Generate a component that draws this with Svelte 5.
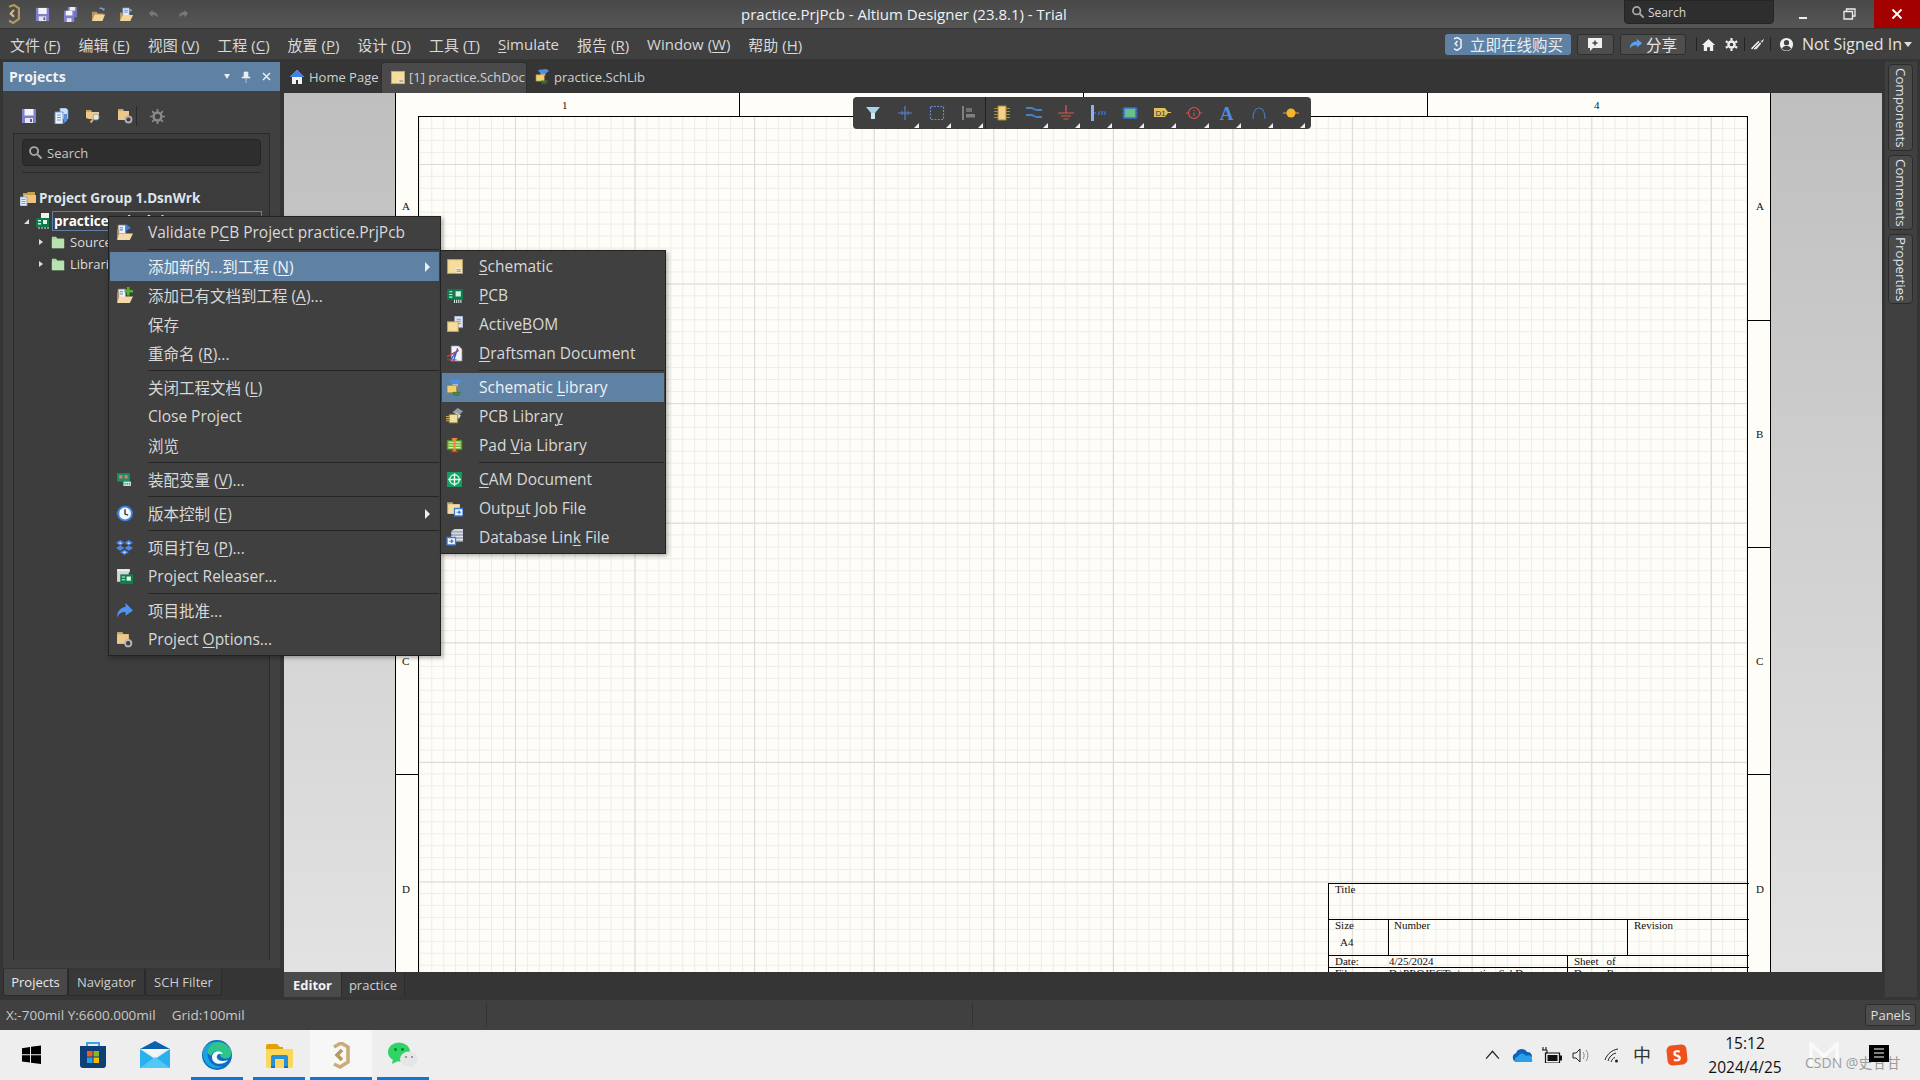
<script>
  const icons = {
    logo: '<path d="M5 3 11 1l6 4v13l-7 5-5-3" fill="none" stroke="#b59a5c" stroke-width="2.6"/><path d="M11 7 7 11.5l4 4" fill="none" stroke="#d3bd87" stroke-width="2.6"/>',
    logow: '<path d="M5 3 11 1l6 4v13l-7 5-5-3" fill="none" stroke="#eef2f6" stroke-width="2.6"/><path d="M11 7 7 11.5l4 4" fill="none" stroke="#eef2f6" stroke-width="2.6"/>',
    save: '<path d="M1 1h14v14H1z" fill="#8080c8"/><path d="M3.500 1h9v6.500h-9z" fill="#f4f4fb"/><path d="M4 10h8v5H4z" fill="#e6e6f2"/><path d="M9 11h2v3H9z" fill="#5a5aa0"/>',
    saveall: '<path d="M5 0h10v11H5z" fill="#7272b8"/><path d="M7 0h6v4H7z" fill="#eee"/><path d="M1 4h11v12H1z" fill="#8080c8"/><path d="M3 4h7v5H3z" fill="#f4f4fb"/><path d="M4 12h5v4H4z" fill="#e6e6f2"/>',
    open: '<path d="M1 5h5l1.500 2H13v7H1z" fill="#b8975a"/><path d="M4 8h11l-3 7H1z" fill="#f3d69a"/><path d="M9 1.500c2-.8 3.500-.3 4.500 1.500" fill="none" stroke="#7aa7e0" stroke-width="1.300"/><path d="m14.500 1-.5 3-2.500-1z" fill="#7aa7e0"/>',
    openproj: '<path d="M4 1h7v9H4z" fill="#e6ecf8" stroke="#6b8cc0" stroke-width=".8"/><path d="M5.500 3.500h4M5.500 5.500h4" stroke="#6b8cc0"/><path d="M1 6h3v8H1z" fill="#b8975a"/><path d="M4 8.500h11L12 15H1z" fill="#f3d69a"/><path d="M12.500 2v3M11 3.500h3" stroke="#7aa7e0"/>',
    undo: '<path d="M6 3 2 7l4 4V8.500c3 0 5 .8 6 3 0-4-2.200-6-6-6.500z" fill="#777"/>',
    redo: '<path d="m10 3 4 4-4 4V8.500c-3 0-5 .8-6 3 0-4 2.200-6 6-6.500z" fill="#777"/>',
    search: '<circle cx="6.500" cy="6.500" r="4.300" fill="none" stroke="#a8a8a8" stroke-width="2"/><path d="m10 10 4.500 4.500" stroke="#a8a8a8" stroke-width="2.200"/>',
    pages: '<path d="M7 0h6l2 2v9H7z" fill="#cfe0f5" stroke="#6c92c8" stroke-width=".7"/><path d="M2 4h8v12H2z" fill="#eef3fb" stroke="#6c92c8"/><path d="M4 7h4M4 9.500h4M4 12h4" stroke="#6c92c8"/><path d="M11 6h3v7l-3 2z" fill="#5d8ed8"/>',
    foldsearch: '<path d="M1 2h5l1 2h7v6H1z" fill="#c8a964"/><path d="M1 4h13v7H4l-3-1z" fill="#ecc98a"/><circle cx="11" cy="9" r="3" fill="#dfe9ef" stroke="#98a8ae"/><path d="m8.500 11-3 3.500" stroke="#c9ac64" stroke-width="2"/>',
    foldgear: '<path d="M1 1h5l1 2h5v9H1z" fill="#c8a964"/><path d="M1 3h11v9H1z" fill="#ecc98a"/><circle cx="11.500" cy="11.500" r="3" fill="#3f3f3f" stroke="#b0b0b0" stroke-width="1.800"/>',
    gear: '<circle cx="8" cy="8" r="4.200" fill="none" stroke="#8b8b8b" stroke-width="2.600"/><path d="M8 0v3M8 13v3M0 8h3M13 8h3M2.300 2.300l2 2M11.700 11.700l2 2M2.300 13.700l2-2M11.700 4.300l2-2" stroke="#8b8b8b" stroke-width="1.800"/>',
    group: '<path d="M3 3h4l1-1h7v9H3z" fill="#c99d50"/><path d="M4 5h12v8H4z" fill="#eec27b"/><path d="M0 7h7v9H0z" fill="#e3edf9" stroke="#7e9bc5" stroke-width=".8"/><path d="M1.500 9.500h4M1.500 11.500h4M1.500 13.500h4" stroke="#7e9bc5"/>',
    proj: '<path d="M5 0h8v8H5z" fill="#f0f0f0"/><path d="M0 5h13v9H0z" fill="#0d7a4a"/><path d="M2 7h3v1.500H2zM2 10h3v1.500H2zM7 7h4v4H7z" fill="#dff3e2"/><path d="M3 14v2M6 14v2M9 14v2M12 14v2" stroke="#dff3e2"/>',
    folder: '<path d="M1 2h5l1 2h8v11H1z" fill="#a9d8a4"/><path d="M1 5h14v10H1z" fill="#b8e2b2"/>',
    validate: '<path d="M2 1h7v8H2z" fill="#eef3fb" stroke="#8b8b8b" stroke-width=".7"/><path d="M3.500 3.500h3M3.500 5.500h3" stroke="#5a7ec8"/><path d="M1 5h2v9H1z" fill="#b6915a"/><path d="M3 9h13l-3 6H1z" fill="#f3d9ab"/><path d="m9 0 5 3.500L9 7z" fill="#3d7ee0"/>',
    addex: '<path d="M2 2h7v8H2z" fill="#eef3fb" stroke="#8b8b8b" stroke-width=".7"/><path d="M3.500 4.500h3M3.500 6.500h3" stroke="#5a7ec8"/><path d="M1 5h2v9H1z" fill="#b6915a"/><path d="M3 9h13l-3 6H1z" fill="#f3d9ab"/><path d="M11.500 0v8M8 4h8" stroke="#55b32c" stroke-width="2.400"/>',
    variant: '<path d="M1 2h12v8H1z" fill="#16915f"/><path d="M3 4h3v3H3zM8 4h3v3H8z" fill="#e77a6f"/><path d="M7 10h7v4H7z" fill="#e6f5e8"/><path d="M8.500 11v2M10.500 11v2M12.500 11v2" stroke="#16915f"/>',
    clock: '<circle cx="8.500" cy="8" r="6.500" fill="#f4f6fa" stroke="#3f82e6" stroke-width="1.800"/><path d="M8.500 4v4.500l3 1" fill="none" stroke="#333" stroke-width="1.300"/><path d="m0 8 3-2v4z" fill="#3f82e6"/>',
    box: '<path d="m4 1 4 2.500L4 6 0 3.500zM12 1l4 2.500L12 6 8 3.500zM4 6l4 2.500L4 11 0 8.500zM12 6l4 2.500-4 2.500-4-2.500zM8 10l4 2.500L8 15l-4-2.500z" fill="#4f86e8"/><path d="m4 3 1.500 1-1.500.8L2.500 4zM12 3l1.500 1-1.500.8-1.500-.8zM8 11.500l1.500 1-1.500.8-1.500-.8z" fill="#dce8fb"/>',
    release: '<path d="M1 1h12v3H1z" fill="#eee"/><path d="M1 3h11v10H1z" fill="#d6d6d6"/><path d="M4 6h12v9H4z" fill="#0f7d52"/><path d="M5.500 8h3v1h-3zM5.500 10.500h3v1h-3zM10 8h4v4h-4z" fill="#dff3e2"/>',
    share: '<path d="m9 1 7 7-7 5V9.500C5 9.500 2.500 11 1 15 1 9 4 5 9 4.700z" fill="#4f93ee"/>',
    options: '<path d="M1 1h5l1 2h5v9H1z" fill="#c5a560"/><path d="M1 3h11v9H1z" fill="#ecc98a"/><circle cx="11.500" cy="11.500" r="3" fill="#3f3f3f" stroke="#b8b8b8" stroke-width="1.800"/>',
    schdoc: '<path d="M1 1h15v14H1z" fill="#b9a36c"/><path d="M2 2h13v12H2z" fill="#f7dd9c"/><path d="M9 9h6v5H9z" fill="#efe9d5"/><path d="M10 11h4M10 12.500h4" stroke="#9c8a58" stroke-width=".8"/>',
    pcbdoc: '<path d="M1 2h15v10H1z" fill="#0b7d50"/><path d="M3 4h3v1H3zM3 6.500h3v1H3zM3 9h3v1H3zM9 4h5v5H9z" fill="#d8f0dc"/><path d="M8 12v3M10 12v3M12 12v3M14 12v3" stroke="#d8f0dc"/>',
    bom: '<path d="M8 0h8v11H8z" fill="#dfe5f3" stroke="#8291b8" stroke-width=".8"/><path d="M10 3h4M10 5h4M10 7h4" stroke="#8291b8"/><path d="M1 5h11v10H1z" fill="#c9a962"/><path d="M2 6h9v8H2z" fill="#f7dd9c"/>',
    drafts: '<path d="M5 1h7l3 3v11H5z" fill="#f4f4f8" stroke="#a2a2b6" stroke-width=".7"/><path d="M1 11 12 5" stroke="#d83838" stroke-width="1.300"/><path d="M7 15 11 3M4 15l5-8" stroke="#3a62d0" stroke-width="1.300"/><path d="M1 14h9" stroke="#d83838"/>',
    schlib: '<path d="m3 1 9-1 3 2-4 3H6z" fill="#4d8de0"/><path d="M6 5h5v2H6z" fill="#e8e2b8"/><path d="M1 6h9v7H1z" fill="#f0cf73" stroke="#8c7a38" stroke-width=".6"/><path d="M6 13h8M7 15h6M8 12v4M11 12v4" stroke="#3c7c2c"/>',
    pcblib: '<path d="m6 4 5-4 5 3-4 4z" fill="#90a0b0"/><path d="m9 4 5 3-2 3-3-2z" fill="#d6e7e2"/><path d="M3 6h8v8H3z" fill="#efe0a0" stroke="#8c7a38" stroke-width=".8"/><path d="M0 8h3M0 10h3M0 12h3" stroke="#c0a860"/>',
    padlib: '<path d="M1 3h14v9H1z" fill="#7ab83c" stroke="#3c7c1c" stroke-width=".8"/><path d="M2.500 5h11M2.500 7.500h11M2.500 10h11" stroke="#e8f0c0"/><path d="m5 1 6 0-2 3v8l2 2H5l2-2V4z" fill="#ee8a3c"/><path d="M4 14h8" stroke="#b83020"/>',
    cam: '<path d="M1 1h14v14H1z" fill="#10a060"/><circle cx="8" cy="8" r="4.500" fill="none" stroke="#e4f6ea" stroke-width="1.300"/><path d="M8 2v12M2 8h12" stroke="#e4f6ea" stroke-width="1.300"/>',
    outjob: '<path d="M1 2h5l1 2h6v9H1z" fill="#b59f6c"/><path d="M2 4h11v9H2z" fill="#f6dca4"/><path d="M8 8h8v7H8z" fill="#eef4fc" stroke="#3c7ee0" stroke-width="1.200"/><path d="M10 11.500h3M12 10l1.500 1.500L12 13" stroke="#3c7ee0"/>',
    dblink: '<path d="M5 2h11v10H5z" fill="#a8b0bc"/><path d="M5 4h11M5 7h11M5 10h11" stroke="#e4e8ee"/><path d="m5 2 3-2h8v2z" fill="#d2d8e0"/><path d="M1 8h8v7H1z" fill="#eef4fc" stroke="#3c7ee0" stroke-width="1.200"/><path d="M3 11.500h3M5 10l1.500 1.500L5 13" stroke="#3c7ee0"/>',
    home: '<path d="M8 1 1 8h2v7h4v-4h2v4h4V8h2z" fill="#f2f2f2"/><path d="M8 1 1 8h14z" fill="#3f82e6"/>',
    homew: '<path d="M8 2 1 8.500h2V15h3.500v-4h3v4H13V8.500h2z" fill="#f0f0f0"/>',
    gearw: '<circle cx="8" cy="8" r="3.800" fill="none" stroke="#f0f0f0" stroke-width="3"/><path d="M8 0v3M8 13v3M1 4l2.500 1.500M12.500 10.500 15 12M1 12l2.500-1.500M12.500 5.500 15 4" stroke="#f0f0f0" stroke-width="2.600"/>',
    brush: '<path d="M1 12 9 4l3 3-5 6H2zM15 2l-2 4-2-2z" fill="#e8e8e8"/><path d="M2 14 14 2" stroke="#404040" stroke-width="1"/>',
    user: '<circle cx="8" cy="8" r="7" fill="#f0f0f0"/><circle cx="8" cy="6" r="2.800" fill="#404040"/><path d="M3 12.500C4 10 6 9.500 8 9.500s4 .5 5 3c-3 2.500-7 2.500-10 0z" fill="#404040"/>',
    chat: '<path d="M1 2h14v10H6l-3 3v-3H1z" fill="#f0f0f0"/><path d="M8 4.500v5M5.500 7h5" stroke="#404040" stroke-width="1.500"/>',
    sharesm: '<path d="m9 2 6 5-6 5V9C6 9 3 10 1 13c0-5 3-8 8-8z" fill="#58a0f0"/>',
    tbfilter: '<path d="M1 2h14L10 8v6H6V8z" fill="#a5d6e8"/><path d="M6 8h4v6H6z" fill="#cdeaf2"/>',
    tbcross: '<path d="M8 1v14M1 8h14" stroke="#5a80cc" stroke-width="1.200"/><path d="M5 6v4M11 6v4" stroke="#5a80cc"/>',
    tbrect: '<path d="M1.500 1.500h13v13h-13z" fill="none" stroke="#6a8ae0" stroke-width="1.200" stroke-dasharray="2 1.300"/>',
    tbalign: '<path d="M1 1h2v14H1z" fill="#808080"/><path d="M5 3h6v4H5z" fill="#707070"/><path d="M5 9h9v3.500H5z" fill="#808080"/>',
    tbcomp: '<path d="M4 1h8v14H4z" fill="#f3d189" stroke="#a88a3a"/><path d="M0 3.500h4M0 6.500h4M0 9.500h4M0 12.500h4M12 3.500h4M12 6.500h4M12 9.500h4M12 12.500h4" stroke="#a88a3a"/>',
    tbwire: '<path d="M0 3h5c3 0 3 2 6 2h5M0 10h5c3 0 3 2 6 2h5" fill="none" stroke="#4a82c0" stroke-width="1.800"/>',
    tbgnd: '<path d="M8 0v8M0 8h16M3 11h10M5.500 14h5" stroke="#e05a50" stroke-width="1.200"/>',
    tbbus: '<path d="M1 0h3v16H1z" fill="#8cb0f0"/><path d="M4 8h2M8 10l2-4M11 10l2-4M14 10l2-4" stroke="#3a70d0" stroke-width="1.500"/>',
    tbsheet: '<path d="M2 3h12v10H2z" fill="#68c088" stroke="#3a70d0" stroke-width="1.500"/><path d="M0 5h2M0 8h2M0 11h2M14 5h2M14 8h2M14 11h2" stroke="#3a70d0"/>',
    tbparam: '<path d="M0 8h2.500M13.500 8H16" stroke="#e05050"/><circle cx="8" cy="8" r="5.500" fill="none" stroke="#e05050" stroke-width="1.100"/><path d="M8 5v1M8 7.500V11" stroke="#e05050"/>',
    tbarc: '<path d="M2 14C2 6 5 3 8 3s6 3 6 11" fill="none" stroke="#4a78b8" stroke-width="1.200"/>',
    tbport: '<path d="M0 8h16" stroke="#e8a040"/><circle cx="8" cy="8" r="4.500" fill="#f5b62c"/>',
    win: '<path d="M1 3.200 9 2v7.300H1zM10 1.800 20 .5v8.800H10zM1 10.300h8v7.300l-8-1.100zM10 10.300h10v8.800l-10-1.300z" fill="#000"/>',
    store: '<path d="M9 4V1h12v3" fill="none" stroke="#2fa8e8" stroke-width="2"/><path d="M2 4h26v19a3 3 0 0 1-3 3H5a3 3 0 0 1-3-3z" fill="#0f3f78"/><path d="M9 9h5.500v5.500H9z" fill="#f05a28"/><path d="M15.500 9H21v5.500h-5.500z" fill="#7fba28"/><path d="M9 15.500h5.500V21H9z" fill="#25a3e0"/><path d="M15.500 15.500H21V21h-5.500z" fill="#fdb900"/>',
    mail: '<path d="M0 8 15 0l15 8z" fill="#0a62ae"/><path d="M4 8h22l-11 8z" fill="#f2f6fa"/><path d="M0 8v19h30V8L15 18z" fill="#2bb0ee"/><path d="m0 27 15-11 15 11z" fill="#52c8f6"/>',
    edge: '<circle cx="15" cy="15" r="15" fill="#0e6cc4"/><path d="M1 10C5 1 22-3 29 10c2 6-3 10-8 8-3-1-3-4-3-5-2-3-8-2-9 3C6 14 4 11 1 10z" fill="#2fc48c"/><path d="M1 12C3 5 10 2 15 2c-7 2-11 8-9 15 1 6 8 11 15 9-8 6-21-1-20-14z" fill="#1ba2e0"/><path d="M10 17c0-6 8-8 11-3-3-1-7 0-6 4 1 3 6 4 11 2-3 5-16 6-16-3z" fill="#f4fbff"/>',
    explorer: '<path d="M0 3a2 2 0 0 1 2-2h9l3 3h3v2H0z" fill="#e3a008"/><path d="M0 6h27v17a2 2 0 0 1-2 2H2a2 2 0 0 1-2-2z" fill="#fbd75c"/><path d="M5 23v-9a2 2 0 0 1 2-2h13a2 2 0 0 1 2 2v9h-4v-7H9v7z" fill="#2690d8"/><path d="M5 25v-2h4v2zM18 25v-2h4v2z" fill="#1a6fb4"/>',
    altium: '<path d="M4 5 11 1l7 4v15l-8 5-6-3" fill="none" stroke="#c8ad78" stroke-width="3.600"/><path d="M12 8 7 13l5 5" fill="none" stroke="#b69a63" stroke-width="3.600"/>',
    wechat: '<ellipse cx="11" cy="10" rx="11" ry="9.500" fill="#2ed565"/><path d="m5 17-1 5 6-3z" fill="#2ed565"/><circle cx="7.500" cy="7.500" r="1.400" fill="#127a38"/><circle cx="14.500" cy="7.500" r="1.400" fill="#127a38"/><ellipse cx="21" cy="17" rx="9" ry="7.500" fill="#e6e6e6"/><path d="m25 22 2 4-5-2z" fill="#e6e6e6"/><circle cx="18" cy="15" r="1.100" fill="#888"/><circle cx="24" cy="15" r="1.100" fill="#888"/>',
    chev: '<path d="M2 11 8 4l6 7" fill="none" stroke="#222" stroke-width="1.200"/>',
    cloud: '<path d="M5 15a4.500 4.500 0 0 1-1-8.800A6 6 0 0 1 15 5a4.500 4.500 0 0 1 5 5h-3z" fill="#0f62b8"/><path d="M5 15c-3 0-3-5 1-5.500C8 5 12 6 14 9c4-2 7 1 6 6z" fill="#2ba0e8"/>',
    batt: '<path d="M1 0v3M4 0v3M0 3h5v3H3.500v3" fill="none" stroke="#111"/><path d="M3.500 6h14v10h-14z" fill="none" stroke="#111" stroke-width="1.200"/><path d="M5.500 8h10v6h-10z" fill="#111"/><path d="M18 8.500h2v5h-2z" fill="#111"/>',
    speaker: '<path d="M1 6h3l4-4v13L4 11H1z" fill="none" stroke="#222"/><path d="M11 5c1.500 2 1.500 5 0 7M14 3c2.500 3 2.500 8 0 11" fill="none" stroke="#888"/>',
    wifi: '<path d="M1 13C3 7 8 3 14 2M4 14c1-4 4-7 8-8M7 15c.6-2 2-4 4-4.500" fill="none" stroke="#222"/><circle cx="12.500" cy="14" r="1.500" fill="#222"/>',
    notif: '<path d="M0 0h20v17H0z" fill="#000"/><path d="M5 4h10M5 8h10M5 12h10" stroke="#fff"/>',
  }

  const menuLeft = ['文件 (&F)', '编辑 (&E)', '视图 (&V)', '工程 (&C)', '放置 (&P)', '设计 (&D)', '工具 (&T)', '&Simulate', '报告 (&R)', 'Window (&W)', '帮助 (&H)']

  const mainMenu = [
    { icon: 'validate', label: 'Validate P&CB Project practice.PrjPcb' },
    { sep: true },
    { label: '添加新的...到工程 (&N)', arrow: true, active: true },
    { icon: 'addex', label: '添加已有文档到工程 (&A)...' },
    { label: '保存' },
    { label: '重命名 (&R)...' },
    { sep: true },
    { label: '关闭工程文档 (&L)' },
    { label: 'Close Project' },
    { label: '浏览' },
    { sep: true },
    { icon: 'variant', label: '装配变量 (&V)...' },
    { sep: true },
    { icon: 'clock', label: '版本控制 (&E)', arrow: true },
    { sep: true },
    { icon: 'box', label: '项目打包 (&P)...' },
    { icon: 'release', label: 'Project Releaser...' },
    { sep: true },
    { icon: 'share', label: '项目批准...' },
    { icon: 'options', label: 'Project &Options...' },
  ]

  const subMenu = [
    { icon: 'schdoc', label: '&Schematic' },
    { icon: 'pcbdoc', label: '&PCB' },
    { icon: 'bom', label: 'Active&BOM' },
    { icon: 'drafts', label: '&Draftsman Document' },
    { sep: true },
    { icon: 'schlib', label: 'Schematic &Library', active: true },
    { icon: 'pcblib', label: 'PCB Librar&y' },
    { icon: 'padlib', label: 'Pad &Via Library' },
    { sep: true },
    { icon: 'cam', label: '&CAM Document' },
    { icon: 'outjob', label: 'Outp&ut Job File' },
    { icon: 'dblink', label: 'Database Lin&k File' },
  ]

  const tools = [
    { icon: 'tbfilter' },
    { icon: 'tbcross', more: true },
    { icon: 'tbrect', more: true },
    { icon: 'tbalign', more: true, sep: true },
    { icon: 'tbcomp' },
    { icon: 'tbwire', more: true },
    { icon: 'tbgnd', more: true },
    { icon: 'tbbus', more: true },
    { icon: 'tbsheet', more: true },
    { tag: true, more: true },
    { icon: 'tbparam', more: true },
    { letter: 'A', more: true },
    { icon: 'tbarc', more: true },
    { icon: 'tbport', more: true },
  ]

  const taskbar = [
    { icon: 'win', w: 21, h: 20, vb: '0 0 21 20' },
    { icon: 'store', w: 30, h: 27, vb: '0 0 30 27' },
    { icon: 'mail', w: 30, h: 28, vb: '0 0 30 28' },
    { icon: 'edge', w: 30, h: 30, vb: '0 0 30 30', on: true },
    { icon: 'explorer', w: 27, h: 25, vb: '0 0 27 25', on: true },
    { icon: 'altium', w: 22, h: 27, vb: '0 0 22 27', on: true, cur: true },
    { icon: 'wechat', w: 30, h: 26, vb: '0 0 30 26', on: true },
  ]

  const zones = [0, 1, 2, 3]

  function parts(label) {
    const i = label.indexOf('&')
    if (i < 0) return [label, '', '']
    return [label.slice(0, i), label[i + 1], label.slice(i + 2)]
  }
</script>

{#snippet ico(name, size = 16, vb = '0 0 16 16', h = size)}
  <svg class="ico" width={size} height={h} viewBox={vb}>{@html icons[name]}</svg>
{/snippet}

{#snippet mnemonic(label)}
  {@const p = parts(label)}
  <span>{p[0]}<u>{p[1]}</u>{p[2]}</span>
{/snippet}

{#snippet menuRows(rows)}
  {#each rows as r}
    {#if r.sep}
      <div class="m-sep"></div>
    {:else}
      <div class="m-row" class:active={r.active}>
        <span class="m-ico">{#if r.icon}{@render ico(r.icon, 17, '0 0 16 16', 17)}{/if}</span>
        {@render mnemonic(r.label)}
        {#if r.arrow}<span class="m-arrow"></span>{/if}
      </div>
    {/if}
  {/each}
{/snippet}

<div class="app">
  <header class="titlebar">
    <div class="quick">
      <span class="q-logo">{@render ico('logo', 18, '0 0 22 24', 20)}</span>
      {#each ['save', 'saveall', 'open', 'openproj', 'undo', 'redo'] as q}
        <span class="q-btn">{@render ico(q, 15)}</span>
      {/each}
    </div>
    <div class="title">practice.PrjPcb - Altium Designer (23.8.1) - Trial</div>
    <div class="top-search">{@render ico('search', 14)}<span>Search</span></div>
    <div class="win-btn nudge"><i class="w-min"></i></div>
    <div class="win-btn nudge">
      <svg width="13" height="13" viewBox="0 0 13 13"><path d="M3.500 3V1h8.500v7H9.500M1 3.500h8.500V11H1z" fill="none" stroke="#eee" stroke-width="1.300"/></svg>
    </div>
    <div class="win-btn close">
      <svg width="12" height="12" viewBox="0 0 12 12"><path d="m1.500 1.500 9 9M10.500 1.500l-9 9" stroke="#fff" stroke-width="1.800"/></svg>
    </div>
  </header>

  <nav class="menubar">
    <div class="menu-left">
      {#each menuLeft as m}
        <span class="menu-item">{@render mnemonic(m)}</span>
      {/each}
    </div>
    <div class="menu-right">
      <button class="buy">{@render ico('logow', 13, '0 0 22 24', 14)}<span>立即在线购买</span></button>
      <button class="hbtn chat">{@render ico('chat', 16)}</button>
      <button class="hbtn share">{@render ico('sharesm', 14)}<span>分享</span></button>
      <i class="vsep first"></i>
      <span class="hicon">{@render ico('homew', 15)}</span>
      <span class="hicon">{@render ico('gearw', 13)}</span>
      <i class="vsep wide"></i>
      <span class="hicon">{@render ico('brush', 15)}</span>
      <i class="vsep wide"></i>
      <span class="hicon user">{@render ico('user', 15)}</span>
      <span class="signed">Not Signed In</span>
      <i class="caret"></i>
    </div>
  </nav>

  <main class="workspace">
    <aside class="dock">
      <div class="panel-head">
        <strong>Projects</strong>
        <span class="ph-btns">
          <i class="ph-down"></i>
          <svg width="10" height="12" viewBox="0 0 10 12"><path d="M3 1h4v5h2v1H1V6h2zM5 7v5" fill="#eee" stroke="#eee" stroke-width=".6"/></svg>
          <svg width="9" height="9" viewBox="0 0 9 9"><path d="m1 1 7 7M8 1 1 8" stroke="#eee" stroke-width="1.500"/></svg>
        </span>
      </div>
      <div class="panel-body">
        <div class="panel-tools">
          {#each ['save', 'pages', 'foldsearch', 'foldgear'] as t}
            <span class="pt-btn">{@render ico(t, 16)}</span>
          {/each}
          <i class="pt-sep"></i>
          <span class="pt-btn">{@render ico('gear', 15)}</span>
        </div>
        <div class="panel-inner">
          <div class="p-search">{@render ico('search', 15)}<span>Search</span></div>
          <div class="p-line"></div>
          <div class="tree">
            <div class="t-row t-group">{@render ico('group', 16)}<b>Project Group 1.DsnWrk</b></div>
            <div class="t-row t-proj">
              <i class="t-open"></i>
              {@render ico('proj', 16)}
              <b class="t-sel">practice.PrjPcb *</b>
            </div>
            <div class="t-row t-child"><i class="t-closed"></i>{@render ico('folder', 14)}<span>Source Documents</span></div>
            <div class="t-row t-child"><i class="t-closed"></i>{@render ico('folder', 14)}<span>Libraries</span></div>
          </div>
        </div>
      </div>
      <div class="panel-tabs">
        <span class="p-tab on">Projects</span>
        <span class="p-tab">Navigator</span>
        <span class="p-tab">SCH Filter</span>
      </div>
    </aside>

    <section class="center">
      <div class="doc-tabs">
        <span class="d-tab">{@render ico('home', 16)}Home Page</span>
        <span class="d-tab on">{@render ico('schdoc', 15)}[1] practice.SchDoc</span>
        <span class="d-tab">{@render ico('schlib', 15)}practice.SchLib</span>
      </div>

      <div class="canvas">
        <div class="sheet">
          {#each zones as z}
            {#if z > 0}
              <i class="tick-v" style="left: {z * 344 - 1}px"></i>
              <i class="tick-h left" style="top: {z * 227}px"></i>
              <i class="tick-h right" style="top: {z * 227}px"></i>
            {/if}
            <span class="zone" style="left: {166 + z * 344}px; top: 6px">{z + 1}</span>
            <span class="zone" style="left: 6px; top: {107 + z * 227.7}px">{'ABCD'[z]}</span>
            <span class="zone" style="left: 1360px; top: {107 + z * 227.7}px">{'ABCD'[z]}</span>
          {/each}
          <div class="frame">
            <div class="block">
              <div class="b-row b-title"><span>Title</span></div>
              <div class="b-row b-mid">
                <div class="b-size"><span>Size</span><span class="a4">A4</span></div>
                <div class="b-num"><span>Number</span></div>
                <div class="b-rev"><span>Revision</span></div>
              </div>
              <div class="b-row b-line">
                <div class="b-a"><span class="lab">Date:</span><span>4/25/2024</span></div>
                <div class="b-b"><span>Sheet</span><span class="of">of</span></div>
              </div>
              <div class="b-row b-line">
                <div class="b-a"><span class="lab">File:</span><span>D:\PROJECT\..\practice.SchDoc</span></div>
                <div class="b-b"><span>Drawn By:</span></div>
              </div>
            </div>
          </div>
        </div>

        <div class="ftool">
          {#each tools as t}
            <span class="ft" class:more={t.more} class:sep={t.sep}>
              {#if t.tag}
                <svg width="17" height="10" viewBox="0 0 17 10"><path d="M0 0h11l3 4h3v1h-3l-3 4H0z" fill="#e0c060"/><text x="1.500" y="7.800" font-size="8" font-family="Liberation Sans" fill="#333">D1</text></svg>
              {:else if t.letter}
                <span class="ft-a">{t.letter}</span>
              {:else}
                {@render ico(t.icon, 16)}
              {/if}
            </span>
          {/each}
        </div>
      </div>

      <div class="editor-tabs">
        <span class="e-tab on">Editor</span>
        <span class="e-tab">practice</span>
      </div>
    </section>

    <aside class="side">
      <span class="s-tab c1">Components</span>
      <span class="s-tab c2">Comments</span>
      <span class="s-tab c3">Properties</span>
    </aside>

    <div class="menu main-menu">{@render menuRows(mainMenu)}</div>
    <div class="menu sub-menu">{@render menuRows(subMenu)}</div>
  </main>

  <footer class="status">
    <div class="st-cell first"><span>X:-700mil Y:6600.000mil</span><span class="grid-txt">Grid:100mil</span></div>
    <div class="st-cell"></div>
    <button class="panels">Panels</button>
  </footer>

  <div class="taskbar">
    {#each taskbar as t}
      <span class="tb" class:on={t.on} class:cur={t.cur}>{@render ico(t.icon, t.w, t.vb, t.h)}</span>
    {/each}
    <div class="tray">
      <span class="tr t1">{@render ico('chev', 17)}</span>
      <span class="tr t2">{@render ico('cloud', 21, '0 0 21 16', 16)}</span>
      <span class="tr t3">{@render ico('batt', 20, '0 0 20 16', 16)}</span>
      <span class="tr t4">{@render ico('speaker', 20, '0 0 20 17', 17)}</span>
      <span class="tr t5">{@render ico('wifi', 16)}</span>
      <span class="tr t6">中</span>
      <span class="tr sogou">S</span>
      <div class="clock"><span>15:12</span><span>2024/4/25</span></div>
    </div>
    <div class="wm">
      <svg class="wm-m" width="30" height="24" viewBox="0 0 30 24"><path d="M2 24V2l13 12L28 2v22" fill="none" stroke="#fafafa" stroke-width="3.500"/></svg>
      <span class="wm-t">CSDN @史甘甘</span>
      <span class="notif">{@render ico('notif', 20, '0 0 20 17', 17)}</span>
    </div>
  </div>
</div>

<style>
  :global(body) {
    margin: 0;
    background: #353535;
  }
  .app {
    width: 1920px;
    height: 1080px;
    display: flex;
    flex-direction: column;
    overflow: hidden;
    font-family: "Open Sans", "Noto Sans CJK SC", sans-serif;
    font-size: 14px;
    color: #d6d6d6;
  }
  .ico { display: block; flex: none; }
  u { text-underline-offset: 2px; text-decoration-thickness: 1px; }

  .titlebar {
    height: 28px;
    flex: none;
    display: flex;
    align-items: center;
    background: linear-gradient(#484848, #565656);
    border-bottom: 1px solid #333;
  }
  .quick { width: 741px; flex: none; display: flex; align-items: center; padding-left: 5px; box-sizing: border-box; }
  .q-logo { width: 30px; }
  .q-btn { width: 28px; display: flex; justify-content: flex-start; }
  .title { font-size: 15px; color: #eef2f6; white-space: nowrap; }
  .top-search {
    margin-left: auto;
    margin-right: 8px;
    width: 150px;
    height: 24px;
    align-self: flex-start;
    box-sizing: border-box;
    padding-left: 6px;
    display: flex;
    align-items: center;
    gap: 3px;
    background: #2e2e2e;
    border: 1px solid #252525;
    border-radius: 0 0 4px 4px;
    font-size: 12px;
    color: #d8d8d8;
  }
  .win-btn { width: 46px; height: 28px; display: flex; align-items: center; justify-content: center; box-sizing: border-box; }
  .win-btn.nudge { padding-right: 4px; }
  .win-btn.close { background: #a30000; }
  .w-min { width: 8px; height: 2px; background: #eee; margin-top: 8px; }

  .menubar {
    height: 30px;
    flex: none;
    display: flex;
    align-items: center;
    background: #404040;
  }
  .menu-left { display: flex; padding-left: 10px; gap: 18px; font-size: 15px; white-space: nowrap; color: #d8d8d8; }
  .menu-right { margin-left: auto; display: flex; align-items: center; padding-right: 8px; color: #e4e4e4; }
  button { font: inherit; color: inherit; padding: 0; }
  .buy {
    width: 126px;
    height: 21px;
    display: flex;
    align-items: center;
    gap: 6px;
    padding-left: 6px;
    box-sizing: border-box;
    background: #5f81a3;
    border: 0;
    border-radius: 3px;
    font-size: 15.500px;
    color: #e8edf2;
    white-space: nowrap;
  }
  .hbtn {
    height: 21px;
    display: flex;
    align-items: center;
    justify-content: center;
    gap: 3px;
    background: #4e4e4e;
    border: 1px solid #2e2e2e;
    border-radius: 3px;
    box-sizing: border-box;
    font-size: 15.500px;
    white-space: nowrap;
  }
  .chat { width: 37px; margin-left: 6px; }
  .share { width: 66px; margin-left: 6px; }
  .vsep { width: 1px; height: 14px; background: #222; }
  .vsep.first { margin-left: 10px; }
  .vsep.wide { margin: 0 1px; }
  .hicon { width: 23px; display: flex; justify-content: center; }
  .hicon.user { width: 30px; }
  .signed { font-size: 16px; white-space: nowrap; color: #e4e4e4; }
  .caret { margin-left: 2px; border: 4px solid transparent; border-top: 5px solid #ddd; border-bottom: 0; }

  .workspace {
    flex: 1;
    min-height: 0;
    display: flex;
    position: relative;
    background: #353535;
  }
  .dock {
    width: 277px;
    margin: 3px 4px 0 3px;
    display: flex;
    flex-direction: column;
    flex: none;
  }
  .panel-head {
    height: 29px;
    flex: none;
    display: flex;
    align-items: center;
    justify-content: space-between;
    padding: 0 9px 0 6px;
    background: #5f81a3;
    color: #f2f2f2;
    font-size: 14px;
  }
  .ph-btns { display: flex; align-items: center; gap: 11px; }
  .ph-down { border: 3.500px solid transparent; border-top: 5px solid #eee; border-bottom: 0; }
  .panel-body {
    height: 877px;
    flex: none;
    background: #404040;
    box-sizing: border-box;
    padding-bottom: 8px;
    display: flex;
    flex-direction: column;
  }
  .panel-tools { height: 42px; box-sizing: border-box; padding: 8px 0 0 18px; flex: none; display: flex; align-items: center; }
  .pt-btn { width: 32px; display: flex; }
  .pt-sep { width: 1px; height: 20px; background: #2b2b2b; margin: 0 13px 0 -13px; }
  .panel-inner {
    flex: 1;
    margin: 0 10px;
    border: 1px solid #2b2b2b;
    border-bottom: 0;
    background: #3c3c3c;
    padding: 5px 8px 0;
  }
  .p-search {
    height: 27px;
    display: flex;
    align-items: center;
    gap: 4px;
    padding-left: 5px;
    background: #2e2e2e;
    border: 1px solid #262626;
    border-radius: 4px;
    box-sizing: border-box;
    font-size: 13px;
    color: #c8c8c8;
  }
  .p-line { height: 1px; background: #2b2b2b; margin-top: 6px; }
  .tree { margin: 14px -8px 0; font-size: 13px; }
  .t-row { display: flex; align-items: center; color: #dcdcdc; white-space: nowrap; }
  .t-group { height: 22px; padding-left: 6px; gap: 3px; margin-bottom: 2px; }
  .t-group b { color: #dde4ec; font-size: 13.500px; }
  .t-proj { height: 20px; padding-left: 10px; }
  .t-open { width: 0; border-left: 5px solid transparent; border-bottom: 5px solid #ddd; margin-right: 7px; }
  .t-sel {
    width: 210px;
    box-sizing: border-box;
    border: 1px solid #5f81a3;
    padding-left: 1px;
    color: #fff;
    font-size: 13.500px;
    line-height: 18px;
  }
  .t-child { height: 22px; padding-left: 25px; gap: 5px; }
  .t-closed { border-left: 4px solid #ddd; border-top: 3.500px solid transparent; border-bottom: 3.500px solid transparent; margin-right: 3px; }
  .panel-tabs { height: 27px; display: flex; margin-top: 1px; }
  .p-tab {
    width: 77px;
    text-align: center;
    line-height: 27px;
    font-size: 13px;
    background: #383838;
    border: 1px solid #2b2b2b;
    border-top: 0;
    border-radius: 0 0 3px 3px;
    box-sizing: border-box;
    color: #cfcfcf;
  }
  .p-tab.on { width: 65px; background: #484848; color: #e8e8e8; }

  .center { flex: 1; min-width: 0; display: flex; flex-direction: column; }
  .doc-tabs { height: 31px; margin-top: 3px; flex: none; display: flex; font-size: 13px; }
  .d-tab {
    display: flex;
    align-items: center;
    gap: 4px;
    padding: 0 5px 2px;
    color: #d0d0d0;
    white-space: nowrap;
  }
  .d-tab:first-child { width: 97px; box-sizing: border-box; padding-left: 5px; }
  .d-tab.on { width: 146px; box-sizing: border-box; padding-left: 8px; background: #4a4a4a; border: 1px solid #2e2e2e; border-bottom: 0; border-radius: 3px 3px 0 0; }
  .d-tab.on + .d-tab { padding-left: 8px; }
  .canvas {
    height: 879px;
    flex: none;
    position: relative;
    overflow: hidden;
    background: linear-gradient(#bfbfbf, #e2e2e2);
  }
  .sheet {
    position: absolute;
    left: 111px;
    top: 0;
    width: 1376px;
    height: 1000px;
    box-sizing: border-box;
    background: #fffdf8;
    border-left: 1px solid #000;
    border-right: 1px solid #000;
    font-family: "Liberation Serif", serif;
    color: #111;
  }
  .tick-v { position: absolute; top: 0; width: 1px; height: 23px; background: #000; }
  .tick-h { position: absolute; width: 23px; height: 1px; background: #000; }
  .tick-h.left { left: 0; }
  .tick-h.right { right: 0; }
  .zone { position: absolute; font-size: 11px; line-height: 12px; font-weight: 400; }
  .frame {
    position: absolute;
    left: 22px;
    top: 23px;
    width: 1330px;
    height: 1000px;
    box-sizing: border-box;
    border: 1px solid #000;
    background-color: #fffdf8;
    background-image:
      linear-gradient(to right, #dcdbd6 1px, transparent 1px),
      linear-gradient(to bottom, #dcdbd6 1px, transparent 1px),
      linear-gradient(to right, #eeede8 1px, transparent 1px),
      linear-gradient(to bottom, #eeede8 1px, transparent 1px);
    background-size: 119.600px 119.600px, 119.600px 119.600px, 11.960px 11.960px, 11.960px 11.960px;
    background-position: 96px 47px, 96px 47px, 0.300px 11px, 0.300px 11px;
  }
  .block {
    position: absolute;
    left: 909px;
    top: 766px;
    width: 420px;
    border: 1px solid #000;
    border-right: 0;
    font-size: 11px;
    line-height: 10px;
  }
  .b-row { display: flex; border-bottom: 1px solid #000; box-sizing: border-box; }
  .b-title { height: 36px; padding: 0 6px; }
  .b-mid { height: 36px; }
  .b-size { width: 60px; padding-left: 6px; border-right: 1px solid #000; display: flex; flex-direction: column; box-sizing: border-box; }
  .a4 { margin: 7px 0 0 5px; }
  .b-num { width: 239px; padding-left: 5px; border-right: 1px solid #000; box-sizing: border-box; }
  .b-rev { padding-left: 6px; }
  .b-line { height: 12px; }
  .b-a { width: 239px; padding-left: 6px; display: flex; border-right: 1px solid #000; box-sizing: border-box; }
  .lab { width: 54px; }
  .b-b { padding-left: 6px; display: flex; }
  .of { margin-left: 8px; }

  .ftool {
    position: absolute;
    left: 569px;
    top: 4px;
    height: 32px;
    display: flex;
    padding: 0 4px;
    background: #3f3f3f;
    border-radius: 4px;
  }
  .ft {
    width: 32.150px;
    height: 32px;
    box-sizing: border-box;
    position: relative;
    display: flex;
    align-items: center;
    justify-content: center;
  }
  .ft.sep { border-right: 1px solid #1e1e1e; background-clip: padding-box; }
  .ft.more::after {
    content: '';
    position: absolute;
    right: 2px;
    bottom: 1px;
    border-left: 5px solid transparent;
    border-bottom: 5px solid #eee;
  }
  .ft-a { font-family: "Liberation Serif", serif; font-weight: 700; font-size: 19px; color: #4f8be0; line-height: 1; }

  .editor-tabs { height: 25px; flex: none; display: flex; font-size: 13px; }
  .e-tab {
    width: 63px;
    text-align: center;
    line-height: 27px;
    color: #cfcfcf;
    background: #383838;
    border-right: 1px solid #2b2b2b;
    box-sizing: border-box;
  }
  .e-tab.on { width: 58px; background: #4a4a4a; color: #f4f4f4; font-weight: 700; }

  .side {
    width: 32px;
    flex: none;
    margin: 3px 3px 3px 3px;
    box-sizing: border-box;
    padding: 2px 4px 0 3px;
    background: #404040;
    display: flex;
    flex-direction: column;
    gap: 4px;
  }
  .s-tab {
    writing-mode: vertical-rl;
    width: 25px;
    box-sizing: border-box;
    text-align: center;
    line-height: 23px;
    font-size: 13.300px;
    color: #dfe4ea;
    background: #4a4a4a;
    border: 1px solid #2b2b2b;
    border-radius: 4px;
  }
  .s-tab.c1 { height: 87px; }
  .s-tab.c2 { height: 75px; }
  .s-tab.c3 { height: 70px; }

  .menu {
    position: absolute;
    box-sizing: border-box;
    padding: 1px;
    background: #404040;
    border: 1px solid #222;
    box-shadow: 2px 2px 4px rgba(0, 0, 0, 0.3);
    font-size: 15.500px;
    color: #d8d8d8;
  }
  .main-menu { left: 108px; top: 157px; width: 333px; }
  .sub-menu { left: 440px; top: 191px; width: 226px; }
  .m-row { height: 29px; display: flex; align-items: center; position: relative; white-space: nowrap; }
  .m-row > span:nth-child(2) { margin-top: -1px; }
  .m-row.active { background: #5f81a3; color: #eef2f6; }
  .m-ico { width: 38px; flex: none; box-sizing: border-box; padding-left: 6px; display: flex; justify-content: flex-start; }
  .sub-menu .m-ico { width: 37px; padding-left: 4px; }
  .m-arrow {
    position: absolute;
    right: 9px;
    top: 10px;
    border-left: 5px solid #eee;
    border-top: 5px solid transparent;
    border-bottom: 5px solid transparent;
  }
  .m-sep { height: 1px; margin: 2px 0 2px 38px; background: #262626; }
  .sub-menu .m-sep { margin-left: 37px; }

  .status {
    height: 30px;
    flex: none;
    display: flex;
    align-items: center;
    background: #404040;
    font-size: 13.500px;
    color: #c8c8c8;
  }
  .st-cell { height: 24px; width: 487px; box-sizing: border-box; display: flex; align-items: center; border-right: 1px solid #333; flex: none; white-space: nowrap; }
  .st-cell.first { padding-left: 6px; }
  .st-cell + .st-cell { width: 486px; }
  .grid-txt { margin-left: 16px; }
  .panels {
    margin-left: auto;
    margin-right: 4px;
    width: 51px;
    height: 22px;
    background: #4c4c4c;
    border: 1px solid #2b2b2b;
    border-radius: 3px;
    font-size: 13px;
    color: #dedede;
  }

  .taskbar {
    height: 50px;
    flex: none;
    display: flex;
    align-items: center;
    background: #eeeeee;
    position: relative;
    color: #111;
  }
  .tb {
    width: 62px;
    height: 50px;
    box-sizing: border-box;
    display: flex;
    align-items: center;
    justify-content: center;
    position: relative;
  }
  .tb.on::after {
    content: '';
    position: absolute;
    left: 5px;
    right: 5px;
    bottom: 0;
    height: 3px;
    background: #0a78d4;
  }
  .tb.cur { background: #f7f7f7; }
  .tb.cur::after { left: 0; right: 0; }
  .tray { margin-left: auto; display: flex; align-items: center; margin-right: 130px; }
  .tr { display: flex; justify-content: center; width: 30px; }
  .t6 { font-size: 18px; color: #333; line-height: 1; }
  .sogou {
    width: 20px;
    height: 20px;
    margin: 0 8px 0 10px;
    border-radius: 5px;
    background: #f0501e;
    color: #fff;
    font-weight: 700;
    font-size: 15px;
    line-height: 20px;
    transform: rotate(-6deg);
  }
  .clock {
    width: 90px;
    margin: -1px 0 0 5px;
    display: flex;
    flex-direction: column;
    align-items: center;
    font-size: 15.500px;
    line-height: 24px;
    color: #111;
  }
  .wm { position: absolute; right: 0; top: 0; bottom: 0; width: 120px; }
  .wm-m { position: absolute; left: 9px; top: 12px; }
  .wm-t { position: absolute; left: 5px; top: 22px; font-size: 14px; color: #9c9c9c; white-space: nowrap; }
  .notif { position: absolute; left: 69px; top: 15px; }
</style>
